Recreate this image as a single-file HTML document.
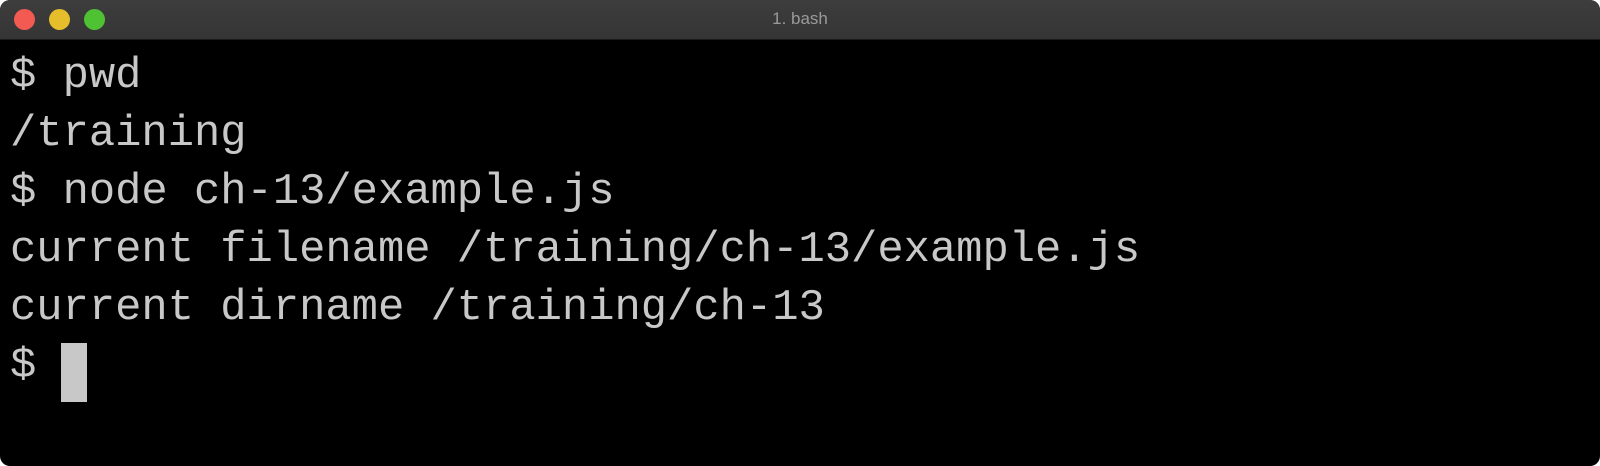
<!DOCTYPE html>
<html><head><style>
html,body{margin:0;padding:0;width:1600px;height:466px;background:#fff;overflow:hidden}
.win{position:absolute;left:0;top:0;width:1600px;height:466px;background:#000;border-radius:10px;overflow:hidden}
.bar{position:absolute;left:0;top:0;width:1600px;height:39px;background:linear-gradient(#3d3d3d,#353535);border-bottom:1px solid #1a1a1a}
.dot{position:absolute;top:9px;width:21px;height:21px;border-radius:50%}
.title{position:absolute;left:0;right:0;top:9px;text-align:center;color:#9a9a9a;font:17px "Liberation Sans",sans-serif}
.l{position:absolute;left:10px;height:58px;line-height:58px;color:#c8c8c8;font-family:"Liberation Mono",monospace;font-size:43.8px;white-space:pre}
.cur{position:absolute;left:61px;top:343px;width:26px;height:59px;background:#c8c8c8}
</style></head><body><div class="win">
<div class="bar"><div class="dot" style="left:14px;background:#f25a52"></div><div class="dot" style="left:49px;background:#e6bd2b"></div><div class="dot" style="left:84px;background:#4fc234"></div><div class="title">1. bash</div></div>
<div class="l" style="top:48px">$ pwd</div>
<div class="l" style="top:106px">/training</div>
<div class="l" style="top:164px">$ node ch-13/example.js</div>
<div class="l" style="top:222px">current filename /training/ch-13/example.js</div>
<div class="l" style="top:280px">current dirname /training/ch-13</div>
<div class="l" style="top:338px">$</div>
<div class="cur"></div>
</div></body></html>
